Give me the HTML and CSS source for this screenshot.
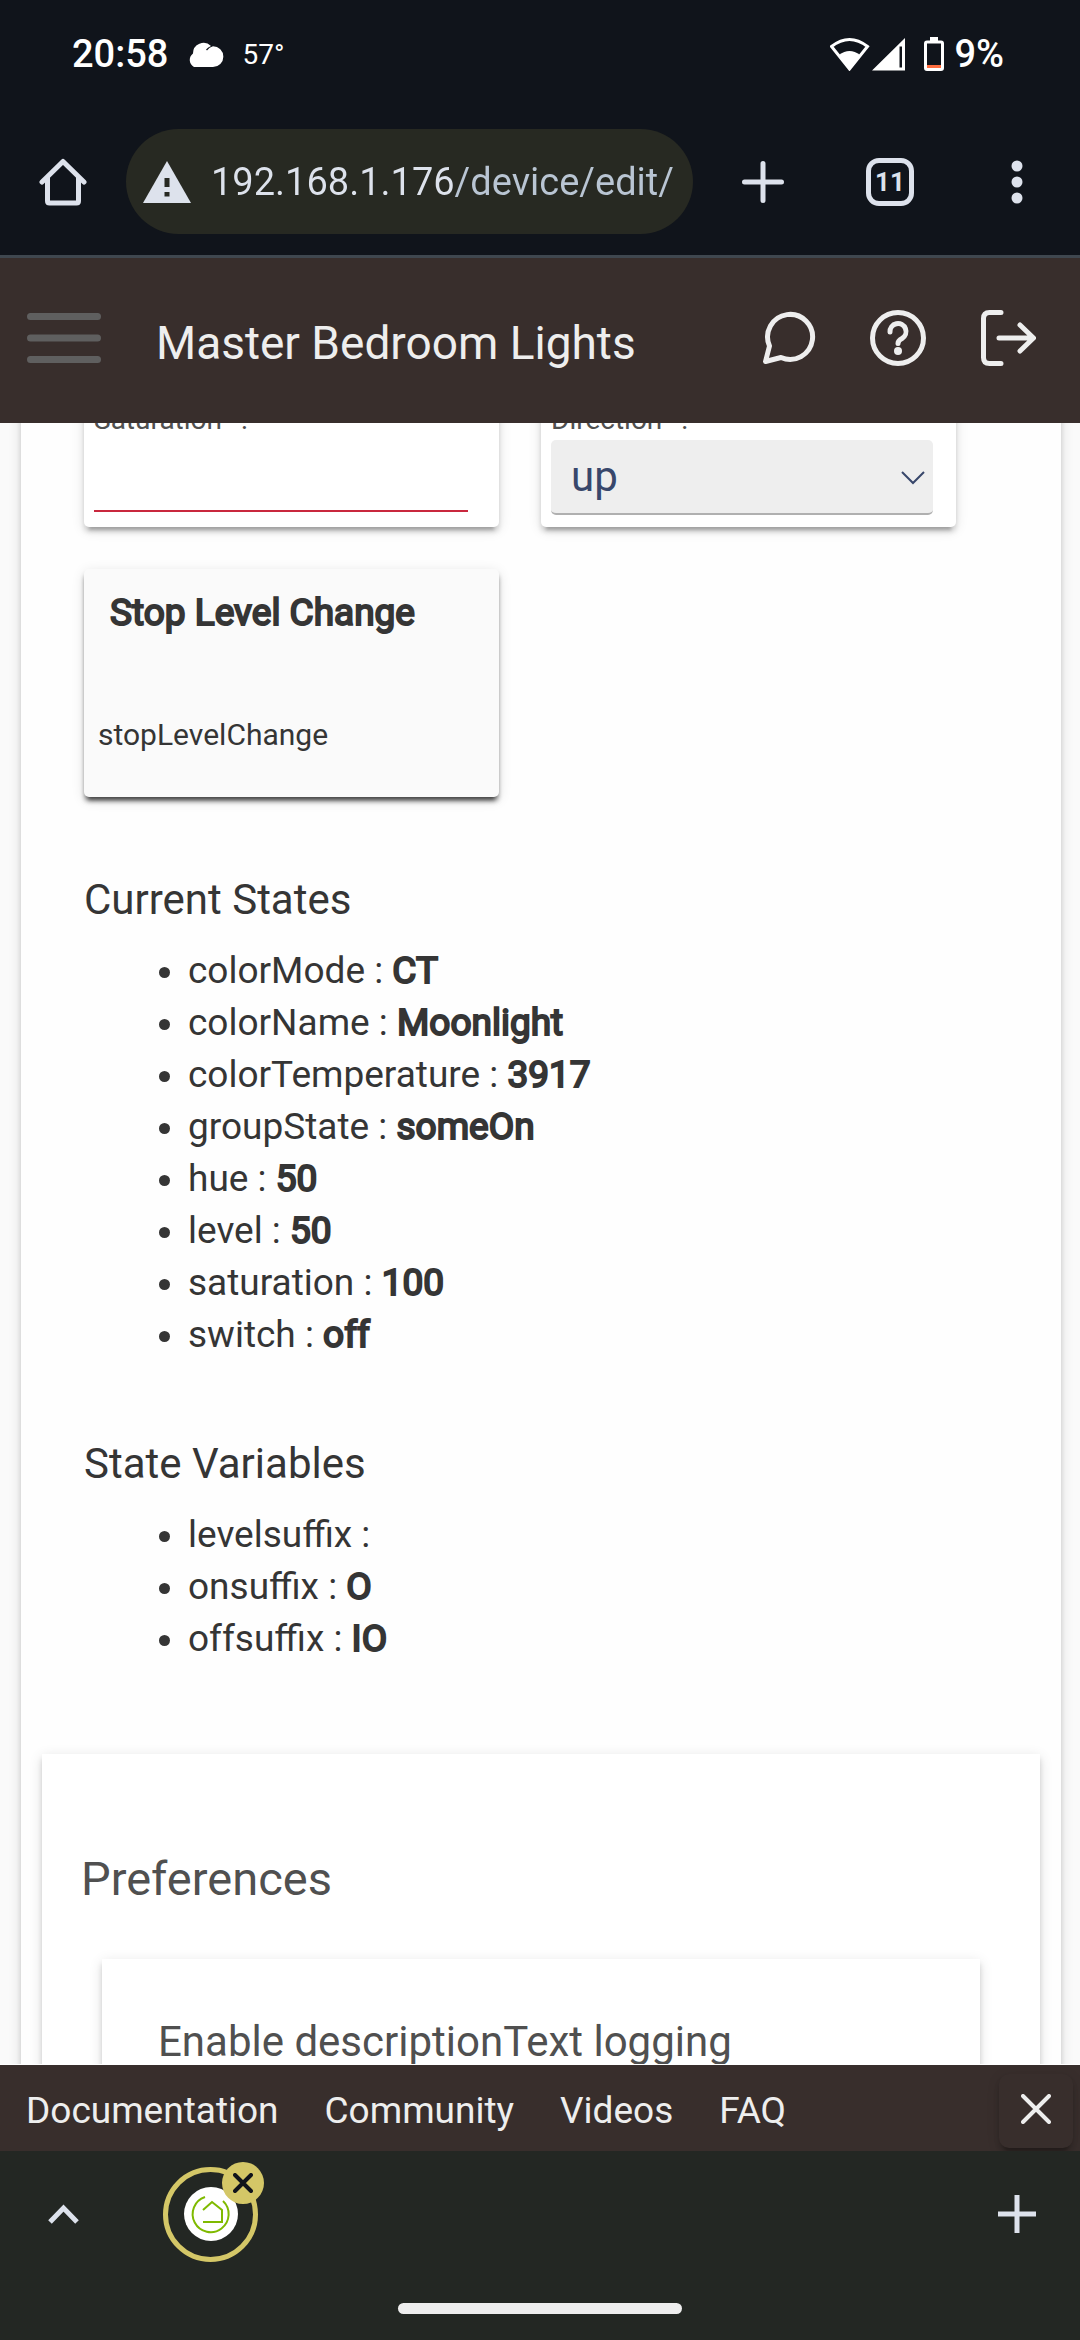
FILE: index.html
```html
<!DOCTYPE html>
<html lang="en">
	<head>
		<meta charset="UTF-8" />
		<meta name="viewport" content="width=device-width, initial-scale=1.0" />
		<title>Master Bedroom Lights</title>
		<link rel="stylesheet" href="styles.css">
	</head>
	<body>
		<div class="status-bar">
			<span class="clock">20:58</span>
			<svg class="cloud" width="38" height="26" viewBox="0 0 38 26">
				<path d="M8 26a8 8 0 0 1-1-13.500A10.500 10.500 0 0 1 25 5a12 12 0 0 0-5 3.500l1 1a11 11 0 0 1 6-4.200A10.300 10.300 0 0 1 27 26z" fill="#fff"/>
			</svg>
			<span class="temp">57°</span>
			<div class="status-icons">
				<svg width="76" height="34" viewBox="0 0 76 34" fill="#fff">
					<path d="M1.500 9.500Q19.500-4.500 37.500 9.500L19.500 32z" fill="none" stroke="#fff" stroke-width="3"/>
					<path d="M9 18q10.500-8 21 0L19.500 33z"/>
					<path d="M42 33.500 75 1v32.500zM69.500 9.500v21h2.500V9.500z" fill-rule="evenodd"/>
				</svg>
				<svg class="battery" width="20" height="34" viewBox="0 0 20 34">
					<path d="M6 0h8v4h-8z" fill="#fff"/>
					<rect x="1.500" y="5" width="17" height="27.500" rx="1.500" fill="none" stroke="#fff" stroke-width="3"/>
					<path d="M3 28h14v3H3z" fill="#ff6d3f"/>
				</svg>
				<span class="clock">9%</span>
			</div>
		</div>

		<div class="toolbar">
			<button class="icon-btn" aria-label="Home">
				<svg width="48" height="48" viewBox="0 0 48 48" fill="none" stroke="#dde2ec" stroke-width="5" stroke-linecap="round" stroke-linejoin="round">
					<path d="M3 24 24 3.500 45 24M8.500 20v23q0 2 2 2h27q2 0 2-2V20"/>
				</svg>
			</button>
			<div class="omnibox">
				<svg width="48" height="42" viewBox="0 0 48 42">
					<path d="M24 0 48 42H0z" fill="#dde2ec"/>
					<path d="M21.500 17h5v9h-5zM21.500 31h5v4.500h-5z" fill="#272922"/>
				</svg>
				<input class="url" type="text" aria-label="Address" value="192.168.1.176/device/edit/">
			</div>
			<div class="toolbar-actions">
				<button class="icon-btn" aria-label="New tab">
					<svg width="48" height="48" viewBox="0 0 48 48" stroke="#dde2ec" stroke-width="5" stroke-linecap="round">
						<path d="M24 5.500v37M5.500 24h37"/>
					</svg>
				</button>
				<button class="tab-count">11</button>
				<button class="icon-btn" aria-label="Menu">
					<svg width="48" height="48" viewBox="0 0 48 48" fill="#dde2ec">
						<circle cx="24" cy="8" r="5.500"/>
						<circle cx="24" cy="24" r="5.500"/>
						<circle cx="24" cy="40" r="5.500"/>
					</svg>
				</button>
			</div>
		</div>

		<header class="header">
			<button class="icon-btn" aria-label="Toggle menu">
				<svg width="74" height="50" viewBox="0 0 74 50" stroke="#5f5f5f" stroke-width="7" stroke-linecap="round">
					<path d="M3.500 3.500h67M3.500 25h67M3.500 46.500h67"/>
				</svg>
			</button>
			<h1>Master Bedroom Lights</h1>
			<div class="header-actions">
				<button class="icon-btn" aria-label="Chat">
					<svg width="56" height="56" viewBox="0 0 56 56" fill="none" stroke="#eee" stroke-width="5" stroke-linejoin="round">
						<path d="M9.500 36A22.500 22.500 0 1 1 21 47.500L5.500 51.500 9.500 36z"/>
					</svg>
				</button>
				<button class="icon-btn" aria-label="Help">
					<svg width="56" height="56" viewBox="0 0 56 56" fill="none" stroke="#eee" stroke-width="5" stroke-linecap="round">
						<circle cx="28" cy="28" r="25.500"/>
						<path d="M20 22a8 8 0 1 1 12 6.500q-4 2-4 5"/>
						<circle cx="28" cy="41" r="4" fill="#eee" stroke="none"/>
					</svg>
				</button>
				<button class="icon-btn" aria-label="Log out">
					<svg width="56" height="56" viewBox="0 0 56 56" fill="none" stroke="#eee" stroke-width="5" stroke-linecap="round" stroke-linejoin="round">
						<path d="M21 2.500H9.500q-6 0-6 6v39q0 6 6 6H21M19 28h34M40 15l13.500 13L40 41"/>
					</svg>
				</button>
			</div>
		</header>

		<main class="page">
			<div class="sheet">
				<div class="commands">
					<div class="card">
						<label for="saturation">Saturation* :</label>
						<input id="saturation" class="number-input" type="text">
					</div>
					<div class="card">
						<label for="direction">Direction* :</label>
						<div class="select-wrap">
							<select id="direction">
								<option>up</option>
								<option>down</option>
							</select>
							<svg class="chevron" width="24" height="14" viewBox="0 0 24 14" fill="none" stroke="#38476b" stroke-width="2">
								<path d="M1 1l11 11L23 1"/>
							</svg>
						</div>
					</div>
					<button class="card command-btn">
						<span class="command-title">Stop Level Change</span>
						<span class="command-name">stopLevelChange</span>
					</button>
				</div>

				<section class="states">
					<h2>Current States</h2>
					<ul>
						<li>colorMode : <strong>CT</strong></li>
						<li>colorName : <strong>Moonlight</strong></li>
						<li>colorTemperature : <strong>3917</strong></li>
						<li>groupState : <strong>someOn</strong></li>
						<li>hue : <strong>50</strong></li>
						<li>level : <strong>50</strong></li>
						<li>saturation : <strong>100</strong></li>
						<li>switch : <strong>off</strong></li>
					</ul>
				</section>

				<section class="states">
					<h2>State Variables</h2>
					<ul>
						<li>levelsuffix :</li>
						<li>onsuffix : <strong>O</strong></li>
						<li>offsuffix : <strong>IO</strong></li>
					</ul>
				</section>

				<section class="preferences">
					<h2>Preferences</h2>
					<div class="preference">
						<p>Enable descriptionText logging</p>
					</div>
				</section>
			</div>
		</main>

		<footer class="footer">
			<nav>
				<a href="#">Documentation</a>
				<a href="#">Community</a>
				<a href="#">Videos</a>
				<a href="#">FAQ</a>
			</nav>
			<button class="footer-close" aria-label="Close">
				<svg width="30" height="30" viewBox="0 0 30 30" stroke="#eee" stroke-width="4" stroke-linecap="round">
					<path d="M2 2l26 26M28 2 2 28"/>
				</svg>
			</button>
		</footer>

		<div class="tab-strip">
			<div class="tab-row">
				<button class="icon-btn" aria-label="Show tabs">
					<svg width="31" height="20" viewBox="0 0 31 20" fill="none" stroke="#dde2ec" stroke-width="5">
						<path d="M2 18 15.500 4 29 18"/>
					</svg>
				</button>
				<div class="tab">
					<svg width="54" height="54" viewBox="0 0 54 54" fill="none" stroke="#7fba00" stroke-width="2">
						<circle cx="27" cy="27" r="27" fill="#fff" stroke="none"/>
						<path d="M21 10A18 18 0 1 0 39 14"/>
						<path d="M19 23l9-8 10 8v12H19"/>
					</svg>
					<button class="tab-close" aria-label="Close tab">
						<svg width="20" height="20" viewBox="0 0 20 20" stroke="#10141b" stroke-width="4" stroke-linecap="round">
							<path d="M2 2l16 16M18 2 2 18"/>
						</svg>
					</button>
				</div>
				<button class="icon-btn tab-add" aria-label="Add tab">
					<svg width="38" height="38" viewBox="0 0 38 38" stroke="#dde2ec" stroke-width="5">
						<path d="M19 0v38M0 19h38"/>
					</svg>
				</button>
			</div>
			<div class="home-handle"></div>
		</div>
	</body>
</html>
```

FILE: styles.css
```css
:root {
	--chrome-bg: #10141b;
	--chrome-fg: #dde2ec;
	--header-bg: #382e2c;
	--text-color: #353535;
	--text-secondary: #505050;
	--card-shadow: 0 5px 5px rgba(0, 0, 0, 0.14), 0 8px 3px -5px rgba(0, 0, 0, 0.2), 0 3px 13px rgba(0, 0, 0, 0.12);
}

* {
	margin: 0;
	padding: 0;
	box-sizing: border-box;
}

body {
	display: flex;
	flex-direction: column;
	height: 100vh;
	font-family: Roboto, "Liberation Sans", sans-serif;
	background-color: #fafafa;
	color: var(--text-color);
}

button,
input,
select {
	font-family: inherit;
	border: none;
	background: none;
	color: inherit;
}

svg {
	display: block;
	flex-shrink: 0;
}

h1,
h2 {
	font-weight: 400;
}

/* Synthetic bold: regular weight thickened by a stroke */
strong,
.command-title {
	font-weight: 400;
	-webkit-text-stroke: 2px currentColor;
}

/* Phone status bar */
.status-bar {
	display: flex;
	align-items: center;
	height: 108px;
	padding: 0 76px 0 72px;
	background-color: var(--chrome-bg);
	color: #fff;
}

.clock {
	font-size: 38px;
	font-weight: 500;
}

.cloud {
	margin-left: 18px;
}

.temp {
	margin-left: 18px;
	font-size: 28px;
}

.status-icons {
	display: flex;
	align-items: center;
	margin-left: auto;
}

.battery {
	margin: 0 10px 0 18px;
}

/* Browser toolbar */
.toolbar {
	display: flex;
	align-items: center;
	height: 150px;
	padding: 0 39px 0;
	background-color: var(--chrome-bg);
	border-bottom: 3px solid #3f474f;
	color: var(--chrome-fg);
}

.omnibox {
	display: flex;
	flex: 1;
	align-items: center;
	gap: 20px;
	min-width: 0;
	height: 105px;
	margin: 0 46px 0 39px;
	padding: 0 18px 0 17px;
	border-radius: 53px;
	background-color: #272922;
}

.url {
	flex: 1;
	min-width: 0;
	font-size: 38px;
	background: linear-gradient(90deg, #dde2ec 242px, #b9c5d3 242px);
	-webkit-background-clip: text;
	-webkit-text-fill-color: transparent;
}

.toolbar-actions {
	display: flex;
	gap: 79px;
}

.tab-count {
	width: 48px;
	height: 48px;
	border: 5px solid var(--chrome-fg);
	border-radius: 13px;
	font-size: 26px;
	font-weight: 700;
}

/* App header */
.header {
	display: flex;
	align-items: center;
	height: 165px;
	padding: 0 44px 5px 27px;
	background-color: var(--header-bg);
	color: #eee;
}

.header h1 {
	padding: 10px 0 0 55px;
	font-size: 46px;
}

.header-actions {
	display: flex;
	gap: 54px;
	margin-left: auto;
}

/* Page */
.page {
	flex: 1;
	min-height: 0;
	overflow: hidden;
}

.sheet {
	margin: -33px 19px 0 21px;
	background-color: #fefefe;
	box-shadow: var(--card-shadow);
}

.commands {
	display: grid;
	grid-template-columns: 1fr 1fr;
	gap: 42px;
	padding: 0 105px 0 63px;
}

.card {
	padding: 12px 23px 12px 10px;
	background-color: #fff;
	border-radius: 5px;
	box-shadow: var(--card-shadow);
	text-align: left;
}

.card label {
	display: block;
	margin-bottom: 2px;
	font-size: 28px;
	line-height: 36px;
	color: var(--text-secondary);
}

.number-input {
	width: calc(100% - 8px);
	height: 72px;
	border-bottom: 2px solid #c9283e;
	font-size: 42px;
}

.select-wrap {
	position: relative;
}

.select-wrap select {
	display: block;
	appearance: none;
	width: 100%;
	height: 75px;
	padding: 0 20px;
	border-bottom: 2px solid #b0b0b0;
	border-radius: 5px;
	background-color: #eee;
	color: #38476b;
	font-size: 42px;
}

.chevron {
	position: absolute;
	top: 31px;
	right: 8px;
	pointer-events: none;
}

.command-btn {
	display: flex;
	flex-direction: column;
	height: 228px;
	padding: 18px 14px;
	background-color: #fafafa;
	box-shadow: var(--card-shadow), 0 5px 5px -2px rgba(0, 0, 0, 0.6);
}

.command-title {
	padding-left: 12px;
	font-size: 37px;
	line-height: 52px;
}

.command-name {
	margin-top: 70px;
	font-size: 30px;
	line-height: 52px;
}

.states {
	padding: 0 63px;
}

.states h2 {
	margin-top: 74px;
	font-size: 42px;
	line-height: 58px;
}

.states ul {
	margin-top: 16px;
	padding-left: 104px;
	font-size: 37px;
	line-height: 52px;
}

.preferences {
	margin: 89px 21px 0;
	padding: 93px 60px 60px;
	background-color: #fff;
	box-shadow: var(--card-shadow);
	color: var(--text-secondary);
}

.preferences h2 {
	margin: 0 0 48px -21px;
	font-size: 47px;
	line-height: 64px;
}

.preference {
	padding: 54px 56px;
	background-color: #fff;
	box-shadow: var(--card-shadow);
	font-size: 42px;
	line-height: 58px;
}

/* Footer links */
.footer {
	display: flex;
	align-items: center;
	justify-content: space-between;
	height: 87px;
	padding: 0 7px 0 26px;
	border-top: 1px solid #fff;
	background-color: var(--header-bg);
	color: #eee;
}

.footer nav {
	display: flex;
	gap: 46px;
	padding-top: 4px;
}

.footer a {
	color: inherit;
	font-size: 37px;
	text-decoration: none;
}

.footer-close {
	display: flex;
	align-items: center;
	justify-content: center;
	width: 74px;
	height: 74px;
	margin-top: 6px;
	padding-bottom: 4px;
	border-radius: 10px;
	background-color: var(--header-bg);
	box-shadow: var(--card-shadow);
}

/* Browser tab strip */
.tab-strip {
	height: 189px;
	padding-top: 11px;
	background-color: #232723;
}

.tab-row {
	display: flex;
	align-items: center;
	height: 104px;
	padding: 0 44px 0 48px;
}

.tab {
	position: relative;
	display: flex;
	align-items: center;
	justify-content: center;
	width: 95px;
	height: 95px;
	margin-left: 84px;
	border: 5px solid #d4c767;
	border-radius: 50%;
}

.tab-close {
	position: absolute;
	top: -10px;
	right: -11px;
	display: flex;
	align-items: center;
	justify-content: center;
	width: 42px;
	height: 42px;
	border-radius: 50%;
	background-color: #d4c767;
}

.tab-add {
	margin-left: auto;
}

.home-handle {
	width: 284px;
	height: 11px;
	margin: 37px auto 0;
	border-radius: 6px;
	background-color: #eee;
}
```
